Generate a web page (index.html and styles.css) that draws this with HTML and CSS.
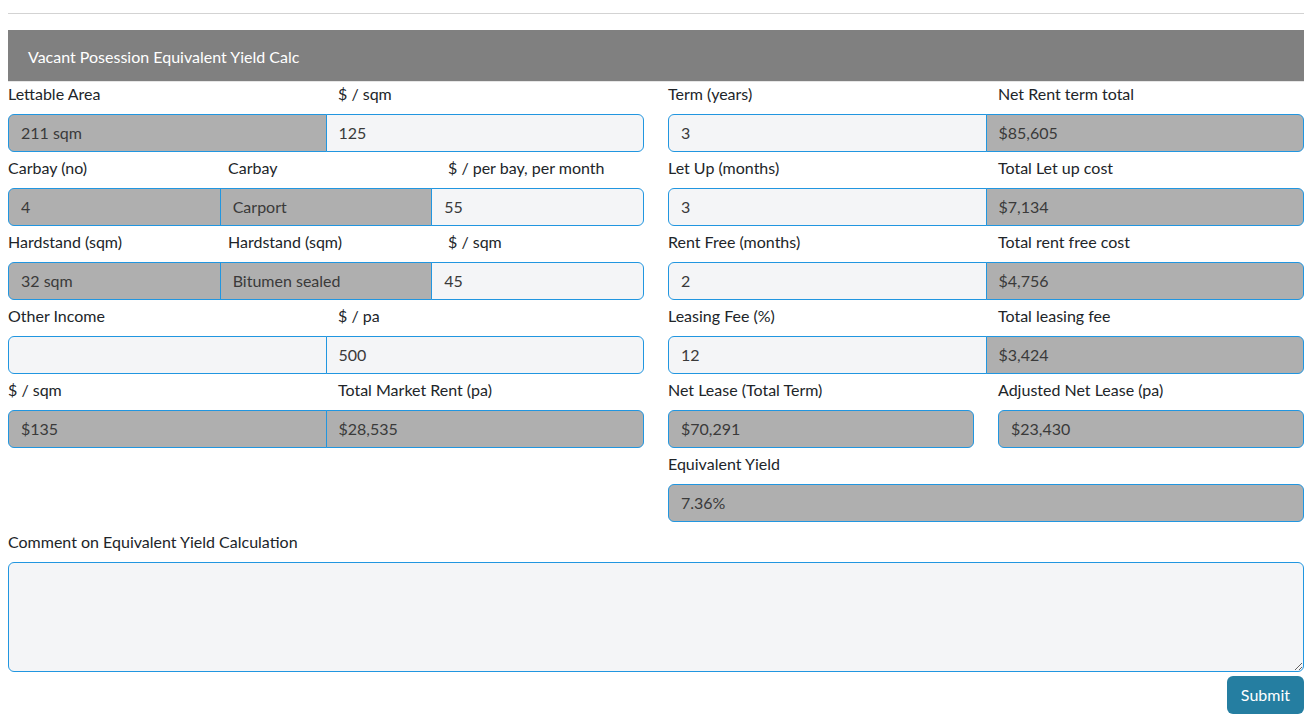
FILE: index.html
```html
<!DOCTYPE html>
<html lang="en">
<head>
    <meta charset="UTF-8">
    <meta name="viewport" content="width=device-width, initial-scale=1.0">
    <title>Equivalent Yield Calc</title>
    <link rel="stylesheet" href="styles.css">
</head>
<body>

<hr class="top-rule">

<div class="panel-heading">Vacant Posession Equivalent Yield Calc</div>

<form class="calc">
    <div class="columns">
        <!-- left side: rent inputs -->
        <div class="col">
            <div class="labels">
                <label>Lettable Area</label>
                <label>$ / sqm</label>
            </div>
            <div class="input-group">
                <input class="readonly" type="text" value="211 sqm" readonly>
                <input type="text" value="125">
            </div>

            <div class="labels">
                <label>Carbay (no)</label>
                <label>Carbay</label>
                <label>$ / per bay, per month</label>
            </div>
            <div class="input-group">
                <input class="readonly" type="text" value="4" readonly>
                <input class="readonly" type="text" value="Carport" readonly>
                <input type="text" value="55">
            </div>

            <div class="labels">
                <label>Hardstand (sqm)</label>
                <label>Hardstand (sqm)</label>
                <label>$ / sqm</label>
            </div>
            <div class="input-group">
                <input class="readonly" type="text" value="32 sqm" readonly>
                <input class="readonly" type="text" value="Bitumen sealed" readonly>
                <input type="text" value="45">
            </div>

            <div class="labels">
                <label>Other Income</label>
                <label>$ / pa</label>
            </div>
            <div class="input-group">
                <input type="text" value="">
                <input type="text" value="500">
            </div>

            <div class="labels">
                <label>$ / sqm</label>
                <label>Total Market Rent (pa)</label>
            </div>
            <div class="input-group">
                <input class="readonly" type="text" value="$135" readonly>
                <input class="readonly" type="text" value="$28,535" readonly>
            </div>
        </div>

        <!-- right side: lease costs -->
        <div class="col">
            <div class="labels">
                <label>Term (years)</label>
                <label>Net Rent term total</label>
            </div>
            <div class="input-group">
                <input type="text" value="3">
                <input class="readonly" type="text" value="$85,605" readonly>
            </div>

            <div class="labels">
                <label>Let Up (months)</label>
                <label>Total Let up cost</label>
            </div>
            <div class="input-group">
                <input type="text" value="3">
                <input class="readonly" type="text" value="$7,134" readonly>
            </div>

            <div class="labels">
                <label>Rent Free (months)</label>
                <label>Total rent free cost</label>
            </div>
            <div class="input-group">
                <input type="text" value="2">
                <input class="readonly" type="text" value="$4,756" readonly>
            </div>

            <div class="labels">
                <label>Leasing Fee (%)</label>
                <label>Total leasing fee</label>
            </div>
            <div class="input-group">
                <input type="text" value="12">
                <input class="readonly" type="text" value="$3,424" readonly>
            </div>

            <div class="labels">
                <label>Net Lease (Total Term)</label>
                <label>Adjusted Net Lease (pa)</label>
            </div>
            <div class="split">
                <input class="readonly" type="text" value="$70,291" readonly>
                <input class="readonly" type="text" value="$23,430" readonly>
            </div>

            <div class="labels">
                <label>Equivalent Yield</label>
            </div>
            <div class="input-group">
                <input class="readonly" type="text" value="7.36%" readonly>
            </div>
        </div>
    </div>

    <div class="comment">
        <label>Comment on Equivalent Yield Calculation</label>
        <textarea rows="4"></textarea>
    </div>

    <div class="actions">
        <button type="button">Submit</button>
    </div>
</form>

</body>
</html>
```

FILE: styles.css
```css
body {
    font-family: 'Segoe UI', 'Lato', 'Noto Sans', sans-serif;
    font-size: 16px;
    line-height: 24px;
    margin: 8px;
    width: 1296px;
    color: #212529;
    background-color: white;
}
.top-rule {
    border: none;
    border-top: 1px solid #d3d3d3;
    margin: 5px 0 16px;
}
.panel-heading {
    background-color: #808080;
    color: white;
    height: 52px;
    line-height: 54px;
    padding: 0 20px;
    border-bottom: 1px solid #e6e6e6;
    box-sizing: border-box;
}
.calc {
    margin-top: -1px;
}
.columns {
    display: flex;
    gap: 24px;
}
.col {
    flex: 1;
    min-width: 0;
}
.labels {
    display: flex;
    margin: 1px -12px 8px;
}
.labels label {
    flex: 1;
    padding: 0 12px;
}
.input-group,
.split {
    display: flex;
    margin-bottom: 4px;
}
.split {
    gap: 24px;
}
input,
textarea {
    font-family: inherit;
    font-size: 16px;
    color: #3a3a3a;
    background-color: #f4f5f7;
    border: 1px solid #2196e0;
    box-sizing: border-box;
    height: 38px;
    padding: 0 12px 2px;
    min-width: 0;
    flex: 1;
    margin: 0;
    outline: none;
}
input.readonly {
    background-color: #afafaf;
}
.input-group input {
    border-radius: 0;
}
.input-group input + input {
    margin-left: -1px;
}
.input-group input:first-child {
    border-radius: 6px 0 0 6px;
}
.input-group input:last-child {
    border-radius: 0 6px 6px 0;
}
.input-group input:only-child {
    border-radius: 6px;
}
.split input {
    border-radius: 6px;
}
.comment {
    margin-top: 4px;
}
.comment label {
    display: block;
    margin-bottom: 8px;
}
.comment textarea {
    display: block;
    width: 100%;
    height: 110px;
    border-radius: 6px;
    padding: 6px 12px;
    resize: vertical;
}
.actions {
    display: flex;
    justify-content: flex-end;
    margin-top: 4px;
}
.actions button {
    font-family: inherit;
    font-size: 16px;
    color: white;
    background-color: #257ea1;
    border: none;
    border-radius: 6px;
    height: 38px;
    padding: 0 14px 1px;
    cursor: pointer;
}
```
